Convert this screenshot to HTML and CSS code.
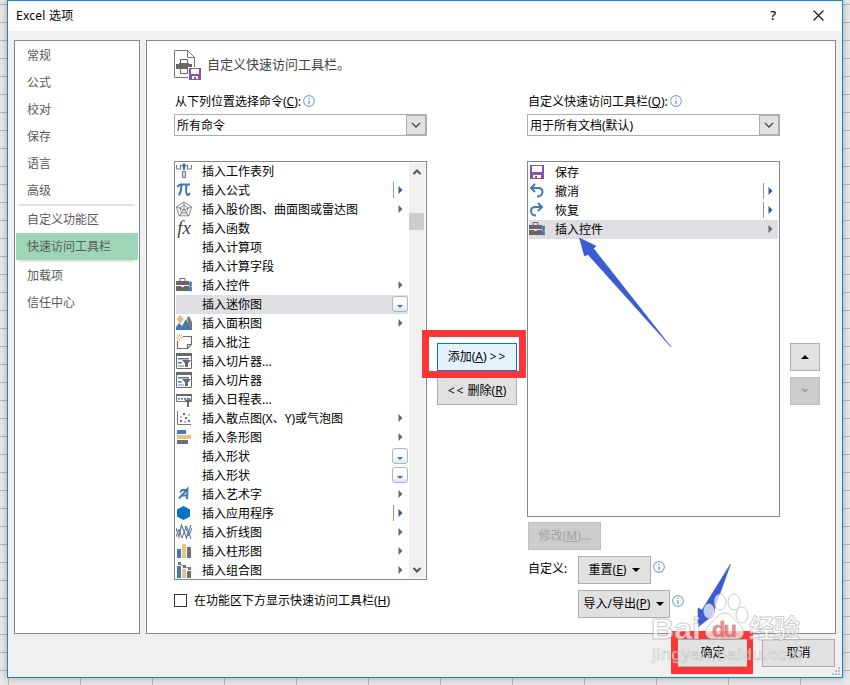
FILE: index.html
```html
<!DOCTYPE html>
<html lang="zh-CN">
<head>
<meta charset="utf-8">
<title>Excel 选项</title>
<link rel="stylesheet" href="styles.css">
</head>
<body>
<svg class="defs" width="0" height="0">
  <defs>
    <symbol id="case" viewBox="0 0 16 16"><path d="M4 4V1.500h5V4" fill="none" stroke="#666"/><path d="M0 4h13v4H0zM0 9h5v1h3V9h5v5H0z" fill="#666"/><path d="M13.500 5h2v4h-1v1h1v4h-2v-4h1V9h-1z" fill="#3c76b0" stroke="#3c76b0" stroke-width=".6"/></symbol>
    <symbol id="slicer" viewBox="0 0 16 16"><path d="M.5.5h15v15H.5z" fill="#fff" stroke="#6a6a6a"/><path d="M0 0h16v3H0z" fill="#6a6a6a"/><path d="M2 5h11v1.500H2zM2 9h4v1.500H2z" fill="#427ab3"/><path d="M2 12h6v2H2z" fill="#a9c4df"/><path d="M6 7h9l-3 3.500V14H9v-3.500z" fill="#6a6a6a"/></symbol>
    <symbol id="more" viewBox="0 0 5 8"><path d="M.5 0 4.500 4 .5 8z" fill="currentColor"/></symbol>
    <symbol id="down" viewBox="0 0 10 6"><path d="M1 1l4 4 4-4" fill="none" stroke="currentColor" stroke-width="1.300"/></symbol>
    <symbol id="info" viewBox="0 0 11 11"><circle cx="5.500" cy="5.500" r="4.900" fill="#fff" stroke="#7fa3d1" stroke-width="1"/><path d="M5 2.500h1v1.200H5zM5 4.800h1v3.700H5z" fill="#4f7fbb"/></symbol>
    <symbol id="disk" viewBox="0 0 16 16"><path d="M1 1h14v14H1z" fill="#8553a8"/><path d="M3 2h10v6H3zM4 11h8v3H4z" fill="#fff"/><path d="M6 12h2v3H6z" fill="#8553a8"/></symbol>
  </defs>
</svg>

<div class="window">
  <header class="titlebar">
    <span class="title">Excel 选项</span>
    <span class="help">?</span>
    <svg class="close" width="11" height="11" viewBox="0 0 11 11"><path d="M.5.5l10 10M10.500.5l-10 10" stroke="#111" stroke-width="1.100"/></svg>
  </header>

  <div class="content">
    <nav class="nav">
      <a>常规</a><a>公式</a><a>校对</a><a>保存</a><a>语言</a><a>高级</a>
      <hr>
      <a>自定义功能区</a><a class="active">快速访问工具栏</a>
      <hr>
      <a>加载项</a><a>信任中心</a>
    </nav>

    <main class="panel">
      <div class="heading">
        <svg width="27" height="30" viewBox="0 0 27 30"><path d="M.5.5h13l7 7V27.500H.5z" fill="#fff" stroke="#767676"/><path d="M13.500.5v7h7" fill="none" stroke="#767676"/><path d="M2 14h3v-1h10v1h3v5H2z" fill="#666"/><path d="M6.500 9.500h7v4h-7zM6.500 18.500h7v5h-7z" fill="#fff" stroke="#666"/><path d="M14 17h13v13H14z" fill="#fff"/><path d="M15 18h12v12H15z" fill="#8553a8"/><path d="M17 19h8v5h-8zM18 26h6v3h-6z" fill="#fff"/><path d="M20 27h2v2h-2z" fill="#8553a8"/></svg>
        <span>自定义快速访问工具栏。</span>
      </div>

      <div class="columns">
        <section class="column">
          <div class="label">从下列位置选择命令(<u>C</u>):<svg class="info"><use href="#info"/></svg></div>
          <div class="combo"><span>所有命令</span><i><svg width="10" height="6"><use href="#down"/></svg></i></div>
          <div class="list commands">
            <ul>
              <li><svg class="icon" viewBox="0 0 16 16"><path d="M.5 2v4h4V2M11.500 2v4h4V2" fill="none" stroke="#777"/><path d="M8 0l3.500 3.500H9V7H7V3.500H4.500z" fill="#3c76b0"/><path d="M6.500 8.500h3v6h-3z" fill="#cfe0f0" stroke="#777"/></svg>插入工作表列</li>
              <li><svg class="icon" viewBox="0 0 16 16"><path d="M1.500 5C2.500 3 3 2.500 5 2.500h9M5.500 3c0 4-.5 7-2.500 10.500M10.500 3c-.6 5-1 9.500 1 10 1.500 0 2-1 2-2" fill="none" stroke="#3c76b0" stroke-width="2"/></svg>插入公式<svg class="more split"><use href="#more"/></svg></li>
              <li><svg class="icon" viewBox="0 0 16 16"><path d="M8 .8l7.500 5-2.500 9H3L.5 5.800zM8 4l4 3-1.500 5h-5L4 7zM8 1v8M1 6l7 3 7-3M3.500 14.500L8 9l4.500 5.500" fill="none" stroke="#777" stroke-width=".9"/></svg>插入股价图、曲面图或雷达图<svg class="more"><use href="#more"/></svg></li>
              <li><span class="icon fx">fx</span>插入函数</li>
              <li><span class="icon"></span>插入计算项</li>
              <li><span class="icon"></span>插入计算字段</li>
              <li><svg class="icon"><use href="#case"/></svg>插入控件<svg class="more"><use href="#more"/></svg></li>
              <li class="selected"><span class="icon"></span>插入迷你图<b class="drop"></b></li>
              <li><svg class="icon" viewBox="0 0 16 16"><path d="M4 0l4 4-4 5-3.500-5z" fill="#e5bc7e"/><path d="M11 3l2-2 3 6v8h-3z" fill="#777"/><path d="M0 15v-3l3-4 3 3 4-7 5 11z" fill="#427ab3"/></svg>插入面积图<svg class="more"><use href="#more"/></svg></li>
              <li><svg class="icon" viewBox="0 0 16 16"><path d="M7 2.500h8.500v8l-4 4h-10V7M15.500 10.500h-4v4" fill="none" stroke="#6a6a6a" stroke-width="1.200"/><path d="M3.500 0v7M0 3.500h7M1 1l5 5M6 1L1 6" stroke="#e5b877"/><circle cx="3.500" cy="3.500" r="1.200" fill="#fff"/></svg>插入批注</li>
              <li><svg class="icon"><use href="#slicer"/></svg>插入切片器...</li>
              <li><svg class="icon"><use href="#slicer"/></svg>插入切片器</li>
              <li><svg class="icon" viewBox="0 0 16 16"><path d="M.5 3.500h15v7H.5z" fill="#fff" stroke="#777"/><path d="M0 3h16v2H0z" fill="#6a6a6a"/><path d="M2 7h2v1.500H2zM5 7h2v1.500H5zM8 7h2v1.500H8zM11 7h3v1.500h-3z" fill="#427ab3"/><path d="M8 8.500h8l-3 3V16h-2v-4.500z" fill="#6a6a6a"/></svg>插入日程表...</li>
              <li><svg class="icon" viewBox="0 0 16 16"><path d="M1.500 1v13.500H15" fill="none" stroke="#777"/><path d="M7 3h2v2H7zM4 10h2v2H4zM9 7h2v2H9zM12 10h2v2h-2z" fill="#427ab3"/><path d="M12 4h2v2h-2zM4 6h2v2H4zM8 11h2v2H8z" fill="#e5b877"/></svg>插入散点图(X、Y)或气泡图<svg class="more"><use href="#more"/></svg></li>
              <li><svg class="icon" viewBox="0 0 16 16"><path d="M1 1h9v4H1z" fill="#427ab3"/><path d="M1 6h14v4H1z" fill="#e9c387"/><path d="M1 11h11v4H1z" fill="#707070"/></svg>插入条形图<svg class="more"><use href="#more"/></svg></li>
              <li><span class="icon"></span>插入形状<b class="drop"></b></li>
              <li><span class="icon"></span>插入形状<b class="drop"></b></li>
              <li><svg class="icon" viewBox="0 0 16 16"><path d="M3 12.500L11.500 3l-.5 10M4 6.500l2-2.500h5M5.500 9.500h6" fill="none" stroke="#427ab3" stroke-width="2"/></svg>插入艺术字<svg class="more"><use href="#more"/></svg></li>
              <li><svg class="icon" viewBox="0 0 16 16"><path d="M7.500 1l6.500 3.500v7L7.500 15 1 11.500v-7z" fill="#0672c6"/></svg>插入应用程序<svg class="more split"><use href="#more"/></svg></li>
              <li><svg class="icon" viewBox="0 0 16 16"><path d="M0 4l3 9L5.500 1l5 13L15 1" fill="none" stroke="#777" stroke-width="1.200"/><path d="M0 13L3 5l3 9 4.500-12L15 15M9 2l4 10 3-8" fill="none" stroke="#427ab3" stroke-width="1"/></svg>插入折线图<svg class="more"><use href="#more"/></svg></li>
              <li><svg class="icon" viewBox="0 0 16 16"><path d="M1 6h4v9H1z" fill="#427ab3"/><path d="M6 1h4v14H6z" fill="#e9c387"/><path d="M11 4h4v11h-4z" fill="#707070"/></svg>插入柱形图<svg class="more"><use href="#more"/></svg></li>
              <li><svg class="icon" viewBox="0 0 16 16"><path d="M1 4h4v12H1z" fill="#427ab3"/><path d="M6 7h4v9H6z" fill="#e9c387"/><path d="M11 9h4v7h-4z" fill="#707070"/><path d="M3 1.500l5 3 6 2" fill="none" stroke="#777"/><path d="M2 0h3v3H2zM7 3h3v3H7zM12 5h3v3h-3z" fill="#777"/></svg>插入组合图<svg class="more"><use href="#more"/></svg></li>
            </ul>
            <div class="scrollbar">
              <svg width="10" height="6" viewBox="0 0 10 6"><path d="M1.500 5L5 1.500 8.500 5" fill="none" stroke="#555" stroke-width="2"/></svg>
              <div class="thumb"></div>
              <svg width="10" height="6" viewBox="0 0 10 6"><path d="M1.500 1L5 4.500 8.500 1" fill="none" stroke="#555" stroke-width="2"/></svg>
            </div>
          </div>
          <div class="check"><span class="box"></span>在功能区下方显示快速访问工具栏(<u>H</u>)</div>
        </section>

        <section class="transfer">
          <div class="button primary">添加(<u>A</u>) <span class="chev">&gt;&gt;</span></div>
          <div class="button"><span class="chev">&lt;&lt;</span> 删除(<u>R</u>)</div>
        </section>

        <section class="column">
          <div class="label">自定义快速访问工具栏(<u>Q</u>):<svg class="info"><use href="#info"/></svg></div>
          <div class="combo"><span>用于所有文档(默认)</span><i><svg width="10" height="6"><use href="#down"/></svg></i></div>
          <div class="list toolbar">
            <ul>
              <li><svg class="icon"><use href="#disk"/></svg>保存</li>
              <li><svg class="icon" viewBox="0 0 16 16"><path d="M2 5h7c3 0 4.500 1.500 4.500 4S11 13.500 8 13.500M6 1L2 5l4 4" fill="none" stroke="#427ab3" stroke-width="2"/></svg>撤消<svg class="more split"><use href="#more"/></svg></li>
              <li><svg class="icon" viewBox="0 0 16 16"><path d="M13 5H6.500C3.500 5 2 6.500 2 9s2 4.500 5 4.500M9 1l4 4-4 4" fill="none" stroke="#427ab3" stroke-width="2"/></svg>恢复<svg class="more split"><use href="#more"/></svg></li>
              <li class="selected"><svg class="icon"><use href="#case"/></svg>插入控件<svg class="more"><use href="#more"/></svg></li>
            </ul>
          </div>
          <div class="button modify disabled">修改(<u>M</u>)...</div>
          <div class="customize">
            <span>自定义:</span>
            <div class="button reset">重置(<u>E</u>)<i class="caret"></i></div>
            <svg class="info"><use href="#info"/></svg>
          </div>
          <div class="customize">
            <span></span>
            <div class="button port">导入/导出(<u>P</u>)<i class="caret"></i></div>
            <svg class="info"><use href="#info"/></svg>
          </div>
        </section>

        <section class="order">
          <div class="button"><i class="caret up"></i></div>
          <div class="button disabled"><i class="caret"></i></div>
        </section>
      </div>
    </main>
  </div>

  <footer class="footer">
    <div class="button">确定</div>
    <div class="button">取消</div>
  </footer>
  <svg class="grip" width="9" height="9" viewBox="0 0 9 9"><path d="M6 0h2v2H6zM3 3h2v2H3zM6 3h2v2H6zM0 6h2v2H0zM3 6h2v2H3zM6 6h2v2H6z" fill="#bbb"/></svg>
</div>

<svg class="marks" width="850" height="685" viewBox="0 0 850 685">
  <path d="M425.500 333.500h97v41h-97z" fill="none" stroke="#fc3636" stroke-width="7"/>
  <path d="M671 631h82v43h-82zM678 639v28h69v-28z" fill="#fc3636" fill-rule="evenodd"/>
  <path d="M579.500 238l16.500 8-2.500 2.500L671 347l-83-92.500-3.500 1.500z" fill="#3b5bd3" stroke="#3b5bd3" stroke-width=".6"/>
  <path d="M698 627v-19l4 2 28.500-46L713 613l-1 3z" fill="#3b5bd3" stroke="#3b5bd3" stroke-width=".6"/>
  <g class="watermark">
    <ellipse cx="709" cy="611" rx="5.500" ry="7.500"/><ellipse cx="720" cy="602" rx="6" ry="8"/><ellipse cx="734" cy="602" rx="6" ry="8"/><ellipse cx="742" cy="615" rx="6" ry="8"/>
    <path d="M725 613c6 0 9 7 14 11 7 6 6 15-3 15h-23c-9 0-10-9-3-15 6-5 8-11 15-11z"/>
    <text class="brand" x="651" y="639" textLength="50" lengthAdjust="spacingAndGlyphs">Bai</text>
    <text class="du" x="712" y="637" textLength="25">du</text>
    <text class="brand cjk" x="749" y="638" textLength="51">经验</text>
    <text class="url" x="652" y="660" textLength="150">jingyan.baidu.com</text>
  </g>
</svg>
</body>
</html>
```
FILE: styles.css
```css
* { box-sizing: border-box; }

body {
  margin: 0;
  width: 850px;
  height: 685px;
  overflow: hidden;
  position: relative;
  padding-left: 7px;
  font: 12px/16px "Noto Sans", "Noto Sans CJK SC", sans-serif;
  color: #000;
  background:
    repeating-linear-gradient(90deg, transparent 0 8px, #b8b8b8 8px 9px, transparent 9px 72px) 0 678px / 850px 7px no-repeat,
    repeating-linear-gradient(#e8e8e8 0 4px, #b8b8b8 4px 5px, #e8e8e8 5px 18px);
}

.defs { position: absolute; }
ul { margin: 0; padding: 0; list-style: none; }
svg { display: block; flex: none; }
u { text-underline-offset: 1px; text-decoration-thickness: 1px; }

.window {
  position: relative;
  width: 836px;
  height: 678px;
  border: 1px solid #1980d2;
  background: #f0f0f0;
  box-shadow: 0 0 7px rgba(0, 0, 0, .3);
}

.titlebar {
  display: flex;
  align-items: center;
  height: 30px;
  padding: 0 18px 2px 8px;
  background: #fff;
}
.title { flex: 1; padding-top: 2px; letter-spacing: .25px; }
.help { margin-right: 37px; font-size: 13px; font-weight: 500; }

.content {
  display: flex;
  gap: 6px;
  height: 594px;
  margin: 9px 6px 0;
}

.nav {
  width: 126px;
  padding: 1px;
  border: 1px solid #828790;
  background: #fff;
  color: #5a5a5a;
}
.nav a { display: block; height: 27px; padding-left: 11px; line-height: 28px; }
.nav hr { height: 2px; margin: 0 3px; border: 0; background: #e2e2e2; }
.nav .active { background: #9fd5b7; }

.panel {
  flex: 1;
  padding: 9px 0 0 27px;
  border: 1px solid #828790;
  background: #fff;
}
.heading { display: flex; height: 30px; gap: 6px; align-items: center; font-size: 13px; color: #444; }
.heading span { margin-top: -2px; }
.columns { display: flex; gap: 10px; }
.column { width: 253px; padding-top: 13px; }
.label { display: flex; height: 16px; padding-left: 1px; line-height: 18px; white-space: nowrap; }
.info { width: 12px; height: 12px; margin: 2px 0 0 2px; }

.combo {
  display: flex;
  height: 22px;
  margin-top: 5px;
  border: 1px solid #abadb3;
}
.combo span { flex: 1; padding-left: 2px; line-height: 21px; }
.combo i {
  display: flex;
  align-items: center;
  justify-content: center;
  width: 20px;
  border: 1px solid #adadad;
  background: #e1e1e1;
  color: #444;
}

.list { display: flex; margin-top: 25px; border: 1px solid #828790; overflow: hidden; }
.commands { height: 419px; }
.toolbar { height: 356px; padding-top: 1px; }
.list ul { width: 232px; margin-left: 1px; }
.toolbar ul { width: 249px; }
.list li { display: flex; align-items: center; height: 19px; white-space: nowrap; }
.selected { background: #dfdee3; }
.icon { flex: none; width: 16px; height: 16px; margin: -1px 10px 0 0; }
.fx { font: italic 19px/15px "Liberation Serif", serif; color: #444; text-align: center; }

.more { width: 5px; height: 8px; margin: -2px 5px 0 auto; color: #666; }
.split { box-sizing: content-box; padding: 4px 0 4px 4px; border-left: 1px solid #999; color: #3d5597; }
.drop {
  display: flex;
  align-items: flex-end;
  justify-content: center;
  width: 16px;
  height: 16px;
  margin: -1px 0 0 auto;
  padding-bottom: 3px;
  border: 1px solid #a9b6cd;
  border-radius: 3px;
  background: linear-gradient(#fff 50%, #dfe4ef);
}
.drop::after { content: ""; border: 3px solid transparent; border-top-color: #5268bd; border-bottom: 0; }

.scrollbar {
  display: flex;
  flex-direction: column;
  align-items: center;
  width: 16px;
  height: 415px;
  margin: 1px 0 0 1px;
  padding: 6px 0 5px;
  background: #f0f0f0;
}
.thumb { width: 15px; height: 17px; margin: 38px 1px auto 0; background: #cdcdcd; }

.check { display: flex; align-items: center; height: 14px; margin-top: 14px; }
.box { width: 13px; height: 13px; margin: -1px 7px 0 0; border: 1px solid #333; }

.button {
  display: flex;
  align-items: center;
  justify-content: center;
  height: 28px;
  border: 1px solid #adadad;
  background: #e1e1e1;
  white-space: pre;
}
.primary { border-color: #0078d7; background: #e5f1fb; }
.disabled { border-color: #bfbfbf; background: #ccc; color: #a3a3a3; }
.chev { font-size: 12px; letter-spacing: 2px; margin-right: -1px; }
.transfer, .order { display: flex; flex-direction: column; gap: 6px; padding-top: 263px; }
.transfer { width: 80px; }
.order { width: 30px; }
.caret { border: 4px solid transparent; border-top-color: currentColor; border-bottom: 0; }
.up { border: 4px solid transparent; border-bottom-color: #000; border-top: 0; }

.modify { width: 73px; margin: 5px 0 0 1px; }
.customize { display: flex; margin: 6px 0 0 1px; }
.customize > span { width: 50px; line-height: 25px; }
.customize .caret { margin-left: 6px; }
.customize .info { margin-top: 5px; }
.reset { width: 73px; }
.port { width: 92px; }

.footer { display: flex; justify-content: flex-end; gap: 13px; margin: 5px 7px 0 0; }
.footer .button { width: 73px; }
.grip { position: absolute; right: 1px; bottom: 1px; }

.marks { position: absolute; left: 0; top: 0; }
.watermark { fill: rgba(255, 255, 255, .7); stroke: rgba(140, 140, 140, .45); stroke-width: 1; }
.brand { font: 700 30px "Liberation Sans", sans-serif; }
.cjk { font: 700 26px "Noto Sans CJK SC", sans-serif; }
.du { font: 700 22px "Liberation Sans", sans-serif; fill: rgba(252, 54, 54, .6); }
.url { font: 17px "Liberation Sans", sans-serif; stroke-width: .7; }
```
